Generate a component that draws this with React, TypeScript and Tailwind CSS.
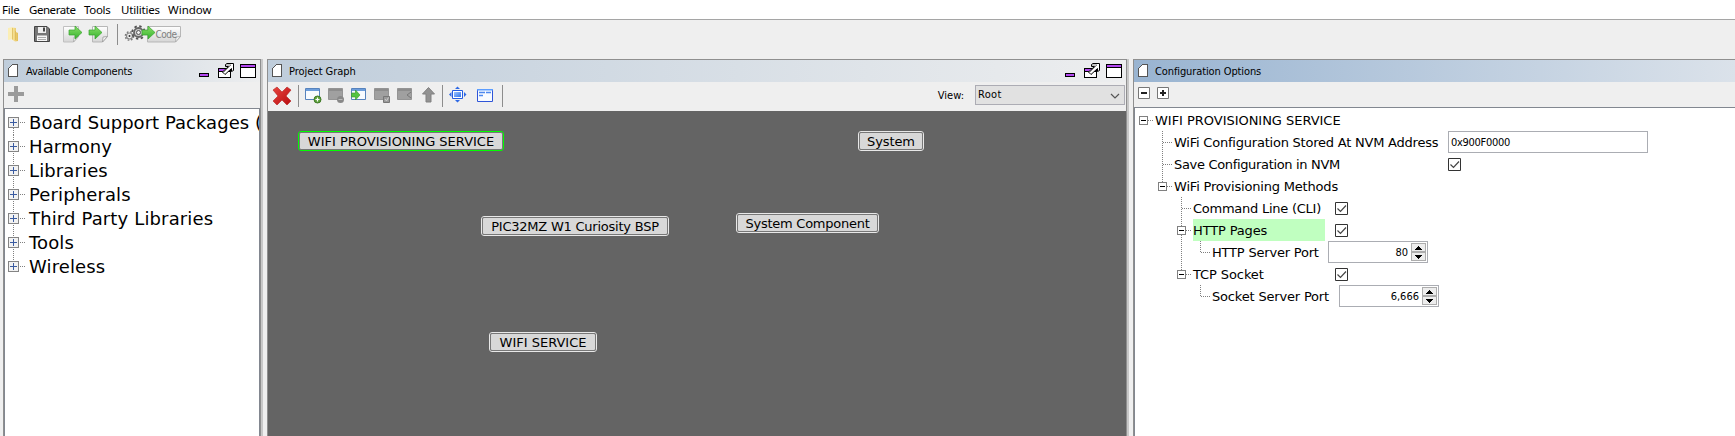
import React from "react";

const ui = "font-['Noto_Sans','Liberation_Sans',sans-serif]";
const tahoma = "font-['DejaVu_Sans_Condensed','DejaVu_Sans',sans-serif] [font-stretch:condensed]";
const verdana = "font-['DejaVu_Sans',sans-serif]";

function PageIcon() {
  return (
    <svg width="11" height="14" viewBox="0 0 11 14" className="shrink-0" shapeRendering="crispEdges">
      <path d="M3.5 0.5H9.5V12.5H0.5V4.5Z" fill="#fff" />
      <path d="M4 0h6v1H4zM3 1h1v1H3zM2 2h1v1H2zM1 3h1v1H1zM0 4h1v9H0zM1 12h9v1H1zM9 0h1v13H9z" fill="#555" />
    </svg>
  );
}

function WindowButtons() {
  return (
    <svg width="58" height="18" viewBox="0 0 58 18" className="mt-[2px] shrink-0" shapeRendering="crispEdges">
      <path d="M0.5 10.5h9v3h-9z" fill="#b347f0" stroke="#000" />
      <path d="M19.500 5.500h12v9h-12z" fill="#fff" stroke="#000" />
      <path d="M20 6h11v2H20z" fill="#b347f0" />
      <path d="M20 8h11v1H20z" fill="#000" />
      <path d="M26.500 1.500L28 0.500H34.500V7.500L32.500 8.500V5.500L26 11.500L23.500 9L29.500 3.500H26.500Z" fill="#fff" stroke="#000" shapeRendering="auto" />
      <path d="M25 9l7-7M27 2h5" stroke="#888" fill="none" shapeRendering="auto" />
      <path d="M41.500 1.500h15v13h-15z" fill="#fff" stroke="#000" />
      <path d="M42 2h14v2H42z" fill="#b347f0" />
      <path d="M42 4h14v1H42z" fill="#000" />
    </svg>
  );
}

function Title({ text, tone, buttons, className }: { text: string; tone: string; buttons?: boolean; className: string }) {
  return (
    <div className={`flex h-[22px] shrink-0 items-center ${tone}`}>
      <PageIcon />
      <span className={`whitespace-nowrap pt-[2px] text-[11px] leading-5 text-black ${tahoma} ${className}`}>{text}</span>
      <span className="grow" />
      {buttons && <WindowButtons />}
    </div>
  );
}

const menus = [
  ["File", "w-[27px] tracking-[-0.2px]"],
  ["Generate", "w-[55px] tracking-[-0.45px]"],
  ["Tools", "w-[37px] tracking-[-0.3px]"],
  ["Utilities", "w-[47px] tracking-[-0.2px]"],
  ["Window", "w-[50px]"],
];

const arrow = "M0 4h6V0l7 6.500L6 13V9H0z";

function MainToolbar() {
  return (
    <svg width="190" height="28" viewBox="0 20 190 28" className="shrink-0">
      <defs>
        <linearGradient id="folder" x1="0" x2="1"><stop offset="0" stopColor="#fbeaa5" /><stop offset="1" stopColor="#e2bd55" /></linearGradient>
        <linearGradient id="sheet" x1="0" y1="0" x2="0" y2="1"><stop offset="0" stopColor="#fff" /><stop offset="1" stopColor="#d5d5d5" /></linearGradient>
        <linearGradient id="green" x1="0" y1="0" x2="0" y2="1"><stop offset="0" stopColor="#8be067" /><stop offset="1" stopColor="#34b22e" /></linearGradient>
      </defs>
      <path d="M8 28l5-1v12l-5 1z" fill="#fbeeb5" />
      <path d="M12 27.500l4 .5v4l2 1v8l-3 .5-3-2z" fill="url(#folder)" />
      <path d="M12.500 28v11.500M15.500 31v9" stroke="#d9b453" strokeWidth=".7" />
      <path d="M34.500 26.500h12.500l2.500 2.500v12.500h-15z" fill="#777" stroke="#444" />
      <path d="M38 27h8v6h-8z" fill="#eee" /><path d="M43 27.500h2v4h-2z" fill="#444" />
      <path d="M37 35.500h10v5.500H37z" fill="#f6f6f6" /><path d="M38 37.500h8M38 39.500h8" stroke="#aaa" />
      <path d="M63.500 26.500h15v10l-5 5.500h-10z" fill="url(#sheet)" stroke="#c0c0c0" />
      <path d="M73.500 42l.5-5 4.500-.5z" fill="#f4f4f4" stroke="#aaa" strokeWidth=".8" />
      <path d={arrow} transform="translate(69 26)" fill="url(#green)" stroke="#3ba331" strokeWidth=".7" />
      <path d="M92.500 26.500h15v10l-5 5.500h-10z" fill="url(#sheet)" stroke="#b7b7b7" />
      <path d="M102.500 42l.5-5 4.500-.5z" fill="#f4f4f4" stroke="#999" strokeWidth=".8" />
      <path d={arrow} transform="translate(89 26)" fill="url(#green)" stroke="#3ba331" strokeWidth=".7" />
      <path d="M117.500 24v21" stroke="#8d8d8d" />
      <circle cx="129.500" cy="36" r="3" fill="#eee" stroke="#888" strokeWidth="1.200" />
      <circle cx="129.500" cy="36" r="4.200" fill="none" stroke="#777" strokeWidth="1.300" strokeDasharray="1.700 1.600" />
      <circle cx="129.500" cy="36" r="1" fill="#333" />
      <circle cx="138.500" cy="32.500" r="4.500" fill="#ccc" stroke="#666" strokeWidth="1.800" />
      <circle cx="138.500" cy="32.500" r="6.300" fill="none" stroke="#555" strokeWidth="1.800" strokeDasharray="2.400 2.550" />
      <circle cx="138.500" cy="32.500" r="2" fill="#eee" stroke="#555" />
      <path d="M147.500 26.500h33v10l-5 5.500h-28z" fill="url(#sheet)" stroke="#b7b7b7" />
      <path d="M175.500 42l.5-5 4.500-.5z" fill="#f4f4f4" stroke="#aaa" strokeWidth=".8" />
      <path d={arrow} transform="translate(142 26)" fill="url(#green)" stroke="#3ba331" strokeWidth=".7" />
      <text x="155.500" y="37.500" fontSize="10" fill="#808080" fontFamily="DejaVu Sans Condensed" textLength="21.500">Code</text>
    </svg>
  );
}

function WinShape({ x, gray }: { x: number; gray?: boolean }) {
  return (
    <g transform={`translate(${x} 87)`}>
      <path d="M.5 1.500h14v11H.5z" fill={gray ? "#a0a0a0" : "#f8fbff"} stroke={gray ? "#949494" : "#5783bd"} />
      <path d="M1 2h13v2H1z" fill={gray ? "#8d8d8d" : "#6c9ddb"} />
    </g>
  );
}

function GraphTools() {
  return (
    <svg width="240" height="28" viewBox="268 82 240 28" className="shrink-0">
      <defs>
        <linearGradient id="red" x1="0" y1="0" x2="1" y2="1"><stop offset="0" stopColor="#e8453f" /><stop offset="1" stopColor="#b80c10" /></linearGradient>
        <linearGradient id="blue" x1="0" y1="0" x2="1" y2="1"><stop offset="0" stopColor="#9cc4ff" /><stop offset="1" stopColor="#3274ea" /></linearGradient>
      </defs>
      <path d="M273 90l4-3 5 5 5-5 4 3-5 6 5 5-4 4-5-5-5 5-4-4 5-5z" fill="url(#red)" stroke="#b52020" strokeWidth=".6" />
      <path d="M298.500 85v22" stroke="#8d8d8d" />
      <WinShape x={305} />
      <circle cx="317.500" cy="99.500" r="3.500" fill="#5da23c" stroke="#3f7926" /><path d="M315.500 99.500h4M317.500 97.500v4" stroke="#fff" strokeWidth="1.200" />
      <WinShape x={328} gray />
      <circle cx="340.500" cy="99.500" r="3.500" fill="#888" /><path d="M338.500 99.500h4" stroke="#bbb" />
      <WinShape x={351} />
      <path d="M351.500 93h4v-3l4.500 5-4.500 5v-3h-4z" fill="#54c441" stroke="#36952a" strokeWidth=".6" />
      <WinShape x={374} gray />
      <path d="M383.500 96.500h6v6h-6z" fill="#999" stroke="#777" /><path d="M385 99l1.500 2 2-3.500" fill="none" stroke="#ccc" />
      <WinShape x={397} gray />
      <path d="M411 92l-4 3 4 3" fill="none" stroke="#777" />
      <path d="M428.500 87.500l6 6.500h-3.500v8h-5v-8h-3.500z" fill="#929292" stroke="#818181" />
      <path d="M442.500 85v22" stroke="#8d8d8d" />
      <path d="M452.500 90.500h10v8h-10z" fill="#fff" stroke="#245be0" /><path d="M454 92h7v5h-7z" fill="url(#blue)" />
      <path d="M455 89l2.500-2.500L460 89zM455 100l2.500 2.500L460 100zM451.500 92l-2.500 2.500 2.500 2.500zM464 92l2.500 2.500L464 97z" fill="#2e69e5" />
      <path d="M477.500 89.500h15v12h-15z" fill="#f8fbff" stroke="#2f55d8" /><path d="M477 89h16v1.500h-16z" fill="#5c9dff" />
      <path d="M479 92.500h6M479 95.500h4M486 92.500h5" stroke="#4d89ef" strokeWidth="1.500" />
      <path d="M502.500 85v22" stroke="#8d8d8d" />
    </svg>
  );
}

const categories = [
  ["Board Support Packages (", "tracking-[0.03px]"],
  ["Harmony", "tracking-[0.12px]"],
  ["Libraries", "tracking-[0.12px]"],
  ["Peripherals", "tracking-[0.12px]"],
  ["Third Party Libraries", "tracking-[0.14px]"],
  ["Tools", "tracking-[0.12px]"],
  ["Wireless", "tracking-[0.12px]"],
];

function Category({ label, tracking, first, last }: { label: string; tracking: string; first: boolean; last: boolean }) {
  return (
    <div className="flex h-6 items-center">
      <svg width="21" height="24" viewBox="0 0 21 24" className="shrink-0" shapeRendering="crispEdges">
        <path d={`M8.500 ${first ? 11 : 0}V${last ? 11 : 24}M9 11.500H20`} stroke="#808080" strokeDasharray="1 1" fill="none" />
        <path d="M3.500 6.500h10v10h-10z" fill="#f2f2f2" stroke="#848484" />
        <path d="M5 11.500h7M8.500 8v7" stroke="#3a5ba0" />
      </svg>
      <span className={`ml-[3px] whitespace-nowrap text-[18px] leading-6 text-black ${verdana} ${tracking}`}>{label}</span>
    </div>
  );
}

function Node({ label, place, tracking, selected }: { label: string; place: string; tracking: string; selected?: boolean }) {
  return (
    <div className={`absolute h-5 rounded-[3px] border ${selected ? "border-[#00ff00]" : "border-[#e8e8e8]"} ${place}`}>
      <div className={`flex h-full items-center justify-center whitespace-nowrap rounded-[2px] border border-[#777] bg-[#d8d8d8] pt-[2px] text-[13px] leading-4 text-black ${verdana} ${tracking}`}>
        {label}
      </div>
    </div>
  );
}

function Check() {
  return (
    <svg width="13" height="13" viewBox="0 0 13 13" className="mt-px shrink-0">
      <path d="M.5.5h12v12H.5z" fill="#fff" stroke="#333" />
      <path d="M2.500 6.500l3 3 5.500-6" fill="none" stroke="#444" strokeWidth="1.200" />
    </svg>
  );
}

function Spinner({ value }: { value: string }) {
  return (
    <div className={`flex h-[22px] w-[100px] shrink-0 border border-[#abadb3] bg-white ${tahoma}`}>
      <span className="grow pr-[3px] pt-px text-right text-[11px] leading-5">{value}</span>
      <svg width="16" height="20" viewBox="0 0 16 20" shapeRendering="crispEdges">
        <path d="M.5 1.500h14v8H.5zM.5 10.500h14v8H.5z" fill="#ededed" stroke="#adadad" />
        <path d="M7 4h1v1h1v1h1v1h1v1H4V7h1V6h1V5h1zM4 13h7v1h-1v1H9v1H8v1H7v-1H6v-1H5v-1H4z" fill="#000" />
      </svg>
    </div>
  );
}

type Row = { label: string; guide: string; width: number; box?: number; tracking: string; labelW: string; hl?: boolean; control?: React.ReactNode };

const rows: Row[] = [
  { label: "WIFI PROVISIONING SERVICE", guide: "M13 11.500h6", width: 20, box: 4, tracking: "tracking-[-0.03px]", labelW: "w-[200px]" },
  { label: "WiFi Configuration Stored At NVM Address", guide: "M27.500 0v22M28 11.500h9", width: 39, tracking: "tracking-[-0.22px]", labelW: "w-[274px]", control: <div className={`h-[22px] w-[200px] border border-[#abadb3] bg-white pl-[2px] pt-px text-[11px] leading-5 tracking-[-0.3px] ${tahoma}`}>0x900F0000</div> },
  { label: "Save Configuration in NVM", guide: "M27.500 0v22M28 11.500h9", width: 39, tracking: "tracking-[-0.33px]", labelW: "w-[274px]", control: <Check /> },
  { label: "WiFi Provisioning Methods", guide: "M27.500 0v11M28 11.500h9", width: 39, box: 23, tracking: "tracking-[-0.19px]", labelW: "w-[200px]" },
  { label: "Command Line (CLI)", guide: "M46.500 0v22M47 11.500h9", width: 58, tracking: "tracking-[-0.25px]", labelW: "w-[142px]", control: <Check /> },
  { label: "HTTP Pages", guide: "M46.500 0v22M47 11.500h9", width: 58, box: 42, tracking: "tracking-[-0.15px]", labelW: "w-[142px]", hl: true, control: <Check /> },
  { label: "HTTP Server Port", guide: "M46.500 0v22M65.500 0v11M66 11.500h9", width: 77, tracking: "tracking-[-0.2px]", labelW: "w-[116px]", control: <Spinner value="80" /> },
  { label: "TCP Socket", guide: "M46.500 0v11M47 11.500h9", width: 58, box: 42, tracking: "tracking-[-0.1px]", labelW: "w-[142px]", control: <Check /> },
  { label: "Socket Server Port", guide: "M65.500 0v11M66 11.500h9", width: 77, tracking: "tracking-[-0.18px]", labelW: "w-[127px]", control: <Spinner value="6,666" /> },
];

function ConfigRow({ row }: { row: Row }) {
  return (
    <div className="flex h-[22px] items-center">
      <svg width={row.width} height="22" viewBox={`0 0 ${row.width} 22`} className="shrink-0" shapeRendering="crispEdges">
        <path d={row.guide} stroke="#808080" strokeDasharray="1 1" fill="none" />
        {row.box !== undefined && (
          <g transform={`translate(${row.box} 7)`}>
            <path d="M.5.5h8v8h-8z" fill="#fff" stroke="#808080" />
            <path d="M2 4.500h5" stroke="#000" />
          </g>
        )}
      </svg>
      <span className={`flex h-[22px] shrink-0 ${row.labelW}`}>
        <span className={`h-[22px] whitespace-nowrap pt-px text-[13px] leading-[22px] text-black ${verdana} ${row.tracking} ${row.hl ? "w-[132px] bg-[#c0ffc0]" : ""}`}>{row.label}</span>
      </span>
      {row.control}
    </div>
  );
}

export default function App() {
  return (
    <div className="flex h-[436px] w-[1735px] flex-col overflow-hidden bg-[#efefef]">
      <nav className={`flex h-5 shrink-0 border-b border-[#a5a5a5] bg-white pl-[2px] text-[11.5px] leading-[19px] text-black ${ui}`}>
        {menus.map(([m, w]) => (
          <span key={m} className={`whitespace-nowrap ${w}`}>{m}</span>
        ))}
      </nav>
      <div className="flex h-[39px] shrink-0 items-start">
        <MainToolbar />
      </div>
      <main className="flex min-h-0 grow pl-[3px]">
        <section className="flex w-[258px] shrink-0 flex-col border-x border-t border-[#8f8f8f] shadow-[2px_0_0_#c8c8c8]">
          <Title text="Available Components" tone="bg-linear-to-r from-[#bfcddb] to-[#edeeef] pl-1 pr-[3px]" buttons className="ml-[7px] tracking-[-0.22px]" />
          <div className="flex h-[26px] shrink-0 items-start pl-1 pt-1">
            <svg width="17" height="17" viewBox="0 0 17 17"><path d="M6 0h4v6h6v4h-6v6H6v-6H0V6h6z" fill="#9b9b9b" /></svg>
          </div>
          <div className="flex grow flex-col overflow-hidden border-x border-t border-[#828790] bg-white pt-[2px]">
            {categories.map(([c, t], i) => (
              <Category key={c} label={c} tracking={t} first={i === 0} last={i === categories.length - 1} />
            ))}
          </div>
        </section>
        <section className="ml-[6px] flex w-[860px] shrink-0 flex-col border-x border-t border-[#8f8f8f] shadow-[2px_0_0_#c8c8c8]">
          <Title text="Project Graph" tone="bg-linear-to-r from-[#bfcddb] to-[#edeeef] pl-1 pr-[3px]" buttons className="ml-[6px] tracking-[-0.05px]" />
          <div className={`flex h-[29px] shrink-0 items-start text-[11px] text-black ${tahoma}`}>
            <GraphTools />
            <span className="grow" />
            <span className="mr-[11px] mt-[6px] leading-4">View:</span>
            <div className="mr-px mt-[3px] flex h-5 w-[150px] items-center border border-[#acacb4] bg-[#e1e1e1] pl-[2px] pr-[4px]">
              <span className="leading-[18px] tracking-[0.3px]">Root</span>
              <span className="grow" />
              <svg width="10" height="8" viewBox="0 0 10 8" className="mt-1"><path d="M1 1l4 4 4-4" fill="none" stroke="#555" strokeWidth="1.200" /></svg>
            </div>
          </div>
          <div className="relative grow bg-[#646464]">
            <Node label="WIFI PROVISIONING SERVICE" place="left-[30px] top-5 w-[206px]" tracking="tracking-[0px]" selected />
            <Node label="System" place="left-[590px] top-5 w-[66px]" tracking="tracking-[-0.1px]" />
            <Node label="PIC32MZ W1 Curiosity BSP" place="left-[213px] top-[105px] w-[188px]" tracking="tracking-[-0.23px]" />
            <Node label="System Component" place="left-[468px] top-[102px] w-[143px]" tracking="tracking-[-0.25px]" />
            <Node label="WIFI SERVICE" place="left-[221px] top-[221px] w-[108px]" tracking="tracking-[0px]" />
          </div>
        </section>
        <section className="ml-[6px] flex min-w-0 grow flex-col border-l border-t border-[#8f8f8f]">
          <Title text="Configuration Options" tone="bg-linear-to-r from-[#99b4d1] to-[#dbe2ea] pl-1" className="ml-[6px] tracking-[-0.11px]" />
          <div className="flex h-[25px] shrink-0 items-start gap-[7px] pl-1 pt-[5px]">
            <svg width="12" height="12" viewBox="0 0 12 12"><path d="M.5.5h11v11H.5z" fill="#fff" stroke="#777" /><path d="M3 6h6" stroke="#222" strokeWidth="2" /></svg>
            <svg width="12" height="12" viewBox="0 0 12 12"><path d="M.5.5h11v11H.5z" fill="#fff" stroke="#777" /><path d="M3 6h6M6 3v6" stroke="#222" strokeWidth="2" /></svg>
          </div>
          <div className="flex grow flex-col border-l border-t border-[#828790] bg-white pt-px">
            {rows.map((r) => (
              <ConfigRow key={r.label} row={r} />
            ))}
          </div>
        </section>
      </main>
    </div>
  );
}
